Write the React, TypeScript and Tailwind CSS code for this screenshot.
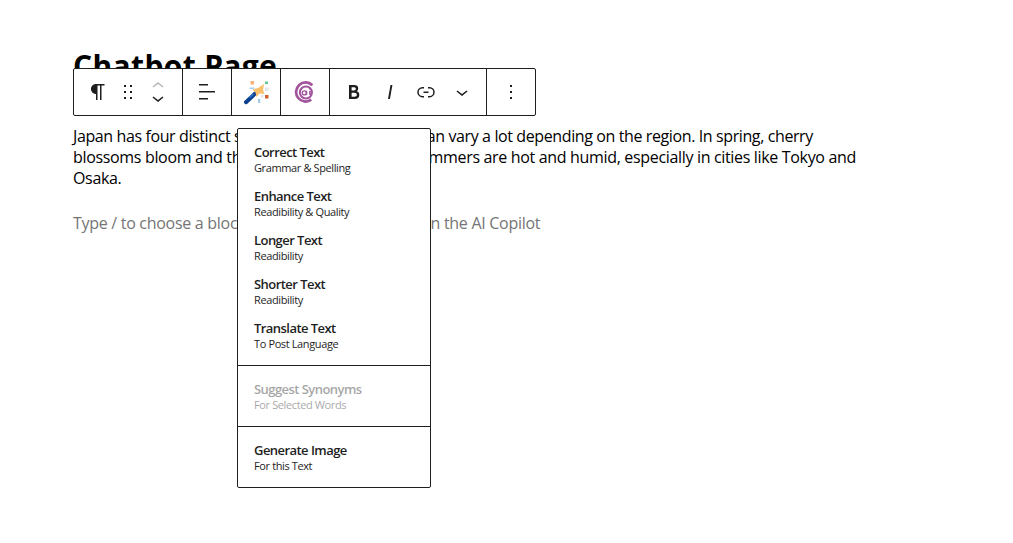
import type { ReactNode } from 'react';

const WPIcon = ({ d, className = 'w-6 h-6' }: { d: string; className?: string }) => (
  <svg viewBox="0 0 24 24" className={className} fill="#1e1e1e">
    <path d={d} />
  </svg>
);

const icons = {
  paragraph:
    'm9.99609 14v-.2251l.00391.0001v6.225h1.5v-14.5h2.5v14.5h1.5v-14.5h3v-1.5h-8.50391c-2.76142 0-5 2.23858-5 5 0 2.7614 2.23858 5 5 5z',
  drag: 'M8 7h2V5H8v2zm0 6h2v-2H8v2zm0 6h2v-2H8v2zm6-14v2h2V5h-2zm0 8h2v-2h-2v2zm0 6h2v-2h-2v2z',
  up: 'M6.5 12.4L12 8l5.5 4.4-.9 1.2L12 10l-4.5 3.6-1-1.2z',
  down: 'M17.5 11.6L12 16l-5.5-4.4.9-1.2L12 14l4.5-3.6 1 1.2z',
  align: 'M13 5.5H4V4h9v1.5Zm7 7H4V11h16v1.5Zm-7 7H4V18h9v1.5Z',
  bold: 'M14.7 11.3c1-.6 1.5-1.6 1.5-3 0-2.3-1.3-3.4-4-3.4H7v14h5.8c1.4 0 2.5-.3 3.3-1 .8-.7 1.2-1.7 1.2-2.9.1-1.9-.8-3.1-2.6-3.7zm-5.1-4h2.3c.6 0 1.1.1 1.4.4.3.3.5.7.5 1.2s-.2 1-.5 1.2c-.3.3-.8.4-1.4.4H9.6V7.3zm4.6 9c-.4.3-1 .4-1.7.4H9.6v-3.9h2.9c.7 0 1.3.2 1.7.5.4.3.6.8.6 1.5s-.2 1.2-.6 1.5z',
  italic: 'M12.5 5L10 19h1.9l2.5-14z',
  link: 'M10 17.389H8.444A5.194 5.194 0 1 1 8.444 7H10v1.5H8.444a3.694 3.694 0 0 0 0 7.389H10v1.5ZM14 7h1.556a5.194 5.194 0 0 1 0 10.39H14v-1.5h1.556a3.694 3.694 0 0 0 0-7.39H14V7Zm-4.5 6h5v-1.5h-5V13Z',
  more: 'M13 19h-2v-2h2v2zm0-6h-2v-2h2v2zm0-6h-2V5h2v2z',
};

const WandIcon = () => (
  <svg viewBox="0 0 26 26" className="w-[26px] h-[26px]">
    <path d="M3 23.2 L12 14.6" stroke="#0b3f8f" strokeWidth="4" strokeLinecap="round" />
    <path d="M6.5 18.8 L10.5 15" stroke="#2f78c8" strokeWidth="1.4" />
    <path d="M9.5 10.5 L15 9 L21 5 L20 11 L21.5 15 L16.5 14.5 L13.5 18 L12.5 13.5 Z" fill="#fbc06c" />
    <rect x="7.5" y="2" width="3.5" height="3.5" fill="#f7b27a" />
    <rect x="22" y="2.5" width="3" height="2.5" fill="#5fc98f" />
    <rect x="6.5" y="8.5" width="5" height="1.5" fill="#a8d4f5" />
    <rect x="22" y="8.5" width="3.5" height="3.5" fill="#e4e6ee" />
    <rect x="22" y="16" width="3.5" height="3.5" fill="#d2602a" />
    <rect x="15" y="20" width="2.2" height="4" fill="#9fc9ef" />
    <rect x="18" y="16" width="2.5" height="2.5" fill="#e4e6ee" />
  </svg>
);

const AiLogo = () => (
  <svg viewBox="0 0 24 24" className="w-[22px] h-[22px]">
    <path d="M20 4.6A10.4 10.4 0 1 0 18.8 20.4" fill="none" stroke="#a2559c" strokeWidth="3" />
    <circle cx="13" cy="12.6" r="6.6" fill="none" stroke="#a2559c" strokeWidth="2.2" />
    <circle cx="11.2" cy="13" r="2.2" fill="none" stroke="#a2559c" strokeWidth="1.5" />
    <path d="M13.7 10.6v4.8" stroke="#a2559c" strokeWidth="1.5" />
    <path d="M17.4 10.8v4.6" stroke="#a2559c" strokeWidth="1.8" />
    <circle cx="17.4" cy="8.4" r="1.1" fill="#a2559c" />
  </svg>
);

const Group = ({ children, className = '' }: { children: ReactNode; className?: string }) => (
  <div className={`flex items-center h-full border-r border-[#1e1e1e] last:border-r-0 ${className}`}>
    {children}
  </div>
);

const sections = [
  {
    items: [
      { title: 'Correct Text', sub: 'Grammar & Spelling' },
      { title: 'Enhance Text', sub: 'Readibility & Quality' },
      { title: 'Longer Text', sub: 'Readibility' },
      { title: 'Shorter Text', sub: 'Readibility' },
      { title: 'Translate Text', sub: 'To Post Language' },
    ],
  },
  { disabled: true, items: [{ title: 'Suggest Synonyms', sub: 'For Selected Words' }] },
  { items: [{ title: 'Generate Image', sub: 'For this Text' }] },
];

export default function App() {
  return (
    <div
      className="relative min-h-[543px] bg-white text-black pt-[44px] pl-[73px] overflow-hidden"
      style={{ fontFamily: '"Open Sans", "Noto Sans", sans-serif' }}
    >
      <h1 className="text-[30px] leading-[44px] font-bold h-[44px] tracking-[0.35px]">Chatbot Page</h1>

      <p className="mt-[38px] w-[790px] text-[16px] leading-[21px] tracking-[-0.33px]">
        <span className="tracking-[-0.39px]">
          Japan has four distinct seasons, and the weather can vary a lot depending on the region. In spring, cherry
        </span>{' '}
        blossoms bloom and the weather is mild, while summers are hot and humid, especially in cities like Tokyo and
        Osaka.
      </p>
      <p className="mt-[24px] text-[16px] leading-[21px] tracking-[-0.29px] text-[#757575]">
        Type / to choose a block or type the prompt here in the AI Copilot
      </p>

      {/* Block toolbar */}
      <div className="absolute left-[73px] top-[68px] flex items-center w-[463px] h-[48px] bg-white border border-[#1e1e1e] rounded-[2px]">
        <Group className="w-[109px] pl-[12px]">
          <WPIcon d={icons.paragraph} />
          <div className="ml-[6px]">
            <WPIcon d={icons.drag} />
          </div>
          <div className="ml-[6px] flex flex-col">
            <WPIcon d={icons.up} className="w-6 h-6 -mb-[6px] opacity-30" />
            <WPIcon d={icons.down} className="w-6 h-6 -mt-[6px]" />
          </div>
        </Group>
        <Group className="w-[49px] justify-center">
          <WPIcon d={icons.align} />
        </Group>
        <Group className="w-[49px] justify-center">
          <WandIcon />
        </Group>
        <Group className="w-[49px] justify-center">
          <AiLogo />
        </Group>
        <Group className="w-[157px] pl-[12px] gap-[12px]">
          <WPIcon d={icons.bold} />
          <WPIcon d={icons.italic} />
          <WPIcon d={icons.link} />
          <WPIcon d={icons.down} />
        </Group>
        <Group className="flex-1 justify-center">
          <WPIcon d={icons.more} />
        </Group>
      </div>

      {/* AI dropdown */}
      <div className="absolute left-[237px] top-[128px] w-[194px] h-[360px] bg-white border border-[#1e1e1e] rounded-[2px] divide-y divide-[#1e1e1e]">
        {sections.map((section, i) => (
          <div key={i} className="py-[8px]">
            {section.items.map((item) => (
              <div
                key={item.title}
                className={`h-[44px] pl-[16px] pt-[6px] text-[#1e1e1e] ${section.disabled ? 'opacity-40' : ''}`}
              >
                <div className="text-[13px] leading-[18px] font-semibold tracking-[-0.55px]">{item.title}</div>
                <div className="text-[11px] leading-[14px] tracking-[-0.38px]">{item.sub}</div>
              </div>
            ))}
          </div>
        ))}
      </div>
    </div>
  );
}
